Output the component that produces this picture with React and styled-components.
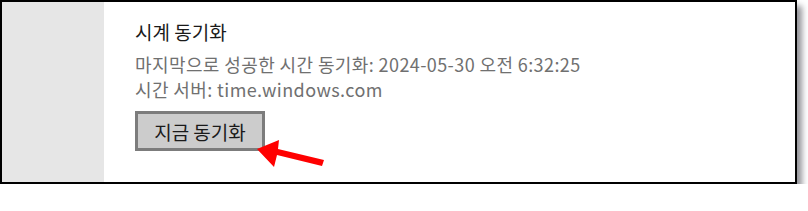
import styled, { createGlobalStyle } from 'styled-components';

const GlobalStyle = createGlobalStyle`
  html, body {
    margin: 0;
    padding: 0;
    background: #ffffff;
  }
  body {
    font-family: "Noto Sans CJK KR", "Noto Sans", sans-serif;
  }
`;

const Frame = styled.div`
  position: relative;
  box-sizing: border-box;
  width: 797px;
  height: 184px;
  border: 2px solid #000;
  background: #fff;
  display: flex;
  box-shadow: 5px 6px 6px rgba(60, 60, 70, 0.55);
`;

const SidePanel = styled.div`
  width: 102px;
  background: #e6e6e6;
`;

const Content = styled.div`
  flex: 1;
  padding: 16px 0 0 31px;
  display: flex;
  flex-direction: column;
  align-items: flex-start;
`;

const Title = styled.h2`
  margin: 0;
  font-size: 19px;
  font-weight: 400;
  color: #1a1a1a;
  line-height: 28px;
`;

const Info = styled.p`
  margin: 6px 0 0;
  font-size: 18px;
  line-height: 25px;
  letter-spacing: 0.4px;
  color: #707070;
`;

const SyncButton = styled.button`
  margin-top: 9px;
  box-sizing: border-box;
  width: 130px;
  height: 40px;
  border: 3px solid #7c7c7c;
  background: #cccccc;
  font-family: inherit;
  font-size: 19px;
  color: #1a1a1a;
  padding: 0;
  cursor: pointer;
`;

const Arrow = styled.svg`
  position: absolute;
  left: 250px;
  top: 134px;
`;

export default function App() {
  return (
    <>
      <GlobalStyle />
      <Frame>
        <SidePanel />
        <Content>
          <Title>시계 동기화</Title>
          <Info>
            마지막으로 성공한 시간 동기화: 2024-05-30 오전 6:32:25
            <br />
            시간 서버: time.windows.com
          </Info>
          <SyncButton>지금 동기화</SyncButton>
        </Content>
        <Arrow width="80" height="40" viewBox="0 0 80 40">
          <polygon points="72,24 70,30 25,19 22,31 5,13 27,4 26,13" fill="#ff0000" />
        </Arrow>
      </Frame>
    </>
  );
}
